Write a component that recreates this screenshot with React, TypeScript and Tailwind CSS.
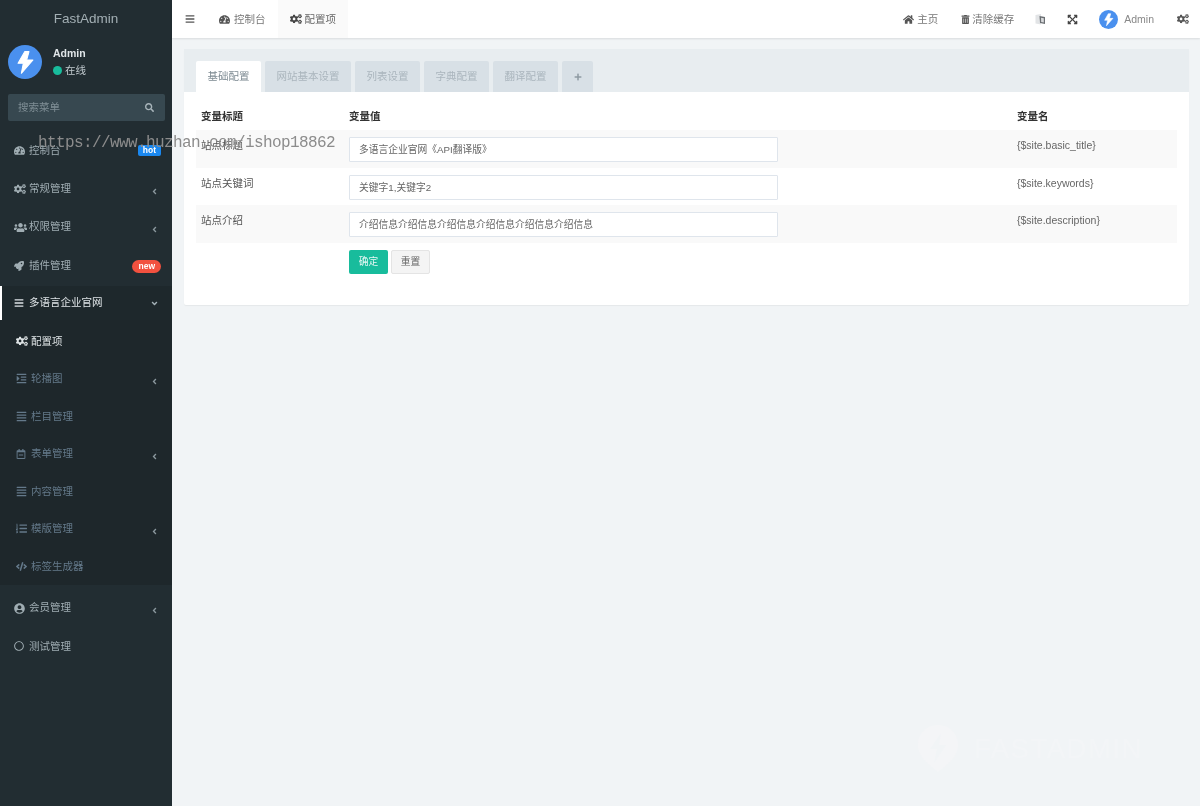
import React from "react";
import {
  FaBars, FaCogs, FaTachometerAlt, FaUsers, FaRocket, FaIndent, FaAlignJustify, FaRegCalendarMinus,
  FaListOl, FaCode, FaUserCircle, FaRegCircle, FaHome, FaTrashAlt, FaExpandArrowsAlt, FaSearch,
  FaAngleLeft, FaAngleDown, FaPlus,
} from "react-icons/fa";

const font = { fontFamily: '"Liberation Sans", "Noto Sans CJK SC", sans-serif' };

function Bolt({ size }: { size: number }) {
  return (
    <svg width={size} height={size} viewBox="0 0 40 40" className="shrink-0">
      <circle cx="20" cy="20" r="20" fill="#4a90ee" />
      <path d="M19.6 7.8 L24.7 7.8 L22 17.6 L29.4 17.6 L15.7 33.3 L18 21.6 L11.8 21.6 Z" fill="#fff" stroke="#fff" strokeWidth="1.2" strokeLinejoin="round" />
    </svg>
  );
}

function LangIcon() {
  return (
    <svg width="11" height="11" viewBox="0 0 11 11" className="ml-[21px]">
      <path d="M0.5 1 L6 0 L6 10.5 L0.5 9.5 Z" fill="#e2e4e6" />
      <path d="M4.5 2 L10 3 V10 L5 9 Z" fill="#6b6f73" />
      <path d="M6 3.8 L8.8 4.3 V8.4 L6.2 8 Z" fill="#d8dadc" />
    </svg>
  );
}

type Item = { label: string; icon: React.ReactNode; arrow?: boolean; badge?: "hot" | "new" };

const top: Item[] = [
  { label: "控制台", icon: <FaTachometerAlt size={11} />, badge: "hot" },
  { label: "常规管理", icon: <FaCogs size={12} />, arrow: true },
  { label: "权限管理", icon: <FaUsers size={13} />, arrow: true },
  { label: "插件管理", icon: <FaRocket size={10} />, badge: "new" },
];
const subs: Item[] = [
  { label: "轮播图", icon: <FaIndent size={11} />, arrow: true },
  { label: "栏目管理", icon: <FaAlignJustify size={11} /> },
  { label: "表单管理", icon: <FaRegCalendarMinus size={10} />, arrow: true },
  { label: "内容管理", icon: <FaAlignJustify size={11} /> },
  { label: "模版管理", icon: <FaListOl size={11} />, arrow: true },
  { label: "标签生成器", icon: <FaCode size={11} /> },
];
const bottom: Item[] = [
  { label: "会员管理", icon: <FaUserCircle size={11} />, arrow: true },
  { label: "测试管理", icon: <FaRegCircle size={10} /> },
];

function Arrow() {
  return <FaAngleLeft size={9} className="mt-[5px] mr-[2px] text-[#8a979d]" />;
}

function MainRow({ item }: { item: Item }) {
  return (
    <div className="flex h-[38.3px] items-center pl-[14px] pr-[11px] text-[#a0adb3]">
      <span className="flex w-[15px] shrink-0 items-center">{item.icon}</span>
      <span className="flex-1">{item.label}</span>
      {item.arrow && <Arrow />}
      {item.badge === "hot" && (
        <span className="rounded-[2px] bg-[#1a88f0] px-[5px] text-[8.5px] font-bold leading-[11px] text-[#fff]">hot</span>
      )}
      {item.badge === "new" && (
        <span className="mt-[1px] rounded-full bg-[#f2513f] px-[6px] text-[8.5px] font-bold leading-[13px] text-[#fff]">new</span>
      )}
    </div>
  );
}

function SubRow({ item }: { item: Item }) {
  return (
    <div className="flex h-[37.5px] items-center pl-[16px] pr-[11px] text-[#64798a]">
      <span className="flex w-[15px] shrink-0 items-center">{item.icon}</span>
      <span className="flex-1">{item.label}</span>
      {item.arrow && <Arrow />}
    </div>
  );
}

function Sidebar() {
  return (
    <aside className="flex w-[172px] shrink-0 flex-col bg-[#222d32] text-[10.5px]">
      <div className="flex h-[38px] items-center justify-center text-[13.5px] font-light text-[#a3afb4]">FastAdmin</div>
      <div className="flex h-[48px] items-center pl-[8px]">
        <Bolt size={34} />
        <div className="ml-[11px]">
          <div className="text-[10.5px] font-bold leading-[17px] text-[#e0e5e8]">Admin</div>
          <div className="flex items-center leading-[17px] text-[#c0c9ce]">
            <span className="mr-[3px] h-[9px] w-[9px] rounded-full bg-[#18bc9c]" />
            在线
          </div>
        </div>
      </div>
      <div className="ml-[8px] mr-[7px] mt-[8px] flex h-[27px] items-center justify-between rounded-[2px] bg-[#374850] pl-[10px] pr-[11px] text-[#7f8e95]">
        <span>搜索菜单</span>
        <FaSearch size={9} className="text-[#a8b4ba]" />
      </div>
      <div className="mt-[10.5px]">
        {top.map((i) => <MainRow key={i.label} item={i} />)}
      </div>
      <div className="mt-[1px] flex h-[34px] items-center border-l-2 border-[#fff] bg-[#1e282c] pl-[12px] pr-[11px] text-[#dfe4e7]">
        <span className="flex w-[15px] shrink-0 items-center"><FaBars size={10} /></span>
        <span className="flex-1">多语言企业官网</span>
        <FaAngleDown size={9} className="mt-[2px] mr-[2px] text-[#a5b2b8]" />
      </div>
      <div className="bg-[#1e272b] pt-[3px]">
        <div className="flex h-[37.5px] items-center pl-[16px] text-[#dfe4e6]">
          <span className="flex w-[15px] shrink-0 items-center"><FaCogs size={12} /></span>
          配置项
        </div>
        {subs.map((i) => <SubRow key={i.label} item={i} />)}
      </div>
      <div className="pt-[3.8px]">
        {bottom.map((i) => <MainRow key={i.label} item={i} />)}
      </div>
    </aside>
  );
}

function Header() {
  return (
    <header className="flex h-[38px] shrink-0 items-center bg-[#fff] text-[10.5px] text-[#777] shadow-[0_1px_2px_rgba(0,0,0,0.1)]">
      <FaBars size={10} className="ml-[13px] text-[#555]" />
      <div className="ml-[24px] flex items-center">
        <FaTachometerAlt size={11} className="text-[#555]" />
        <span className="ml-[4px] pt-[1px]">控制台</span>
      </div>
      <div className="ml-[12px] flex h-full w-[70px] items-center bg-[#fafafa] pl-[12px] text-[#666]">
        <FaCogs size={12} className="text-[#444]" />
        <span className="ml-[3px] pt-[1px]">配置项</span>
      </div>
      <div className="ml-auto flex items-center pr-[11px]">
        <FaHome size={11} className="text-[#555]" />
        <span className="ml-[3px] pt-[1px]">主页</span>
        <FaTrashAlt size={9} className="ml-[23px] text-[#555]" />
        <span className="ml-[2px] pt-[1px]">清除缓存</span>
        <LangIcon />
        <FaExpandArrowsAlt size={11} className="ml-[21px] text-[#444]" />
        <span className="ml-[21px]"><Bolt size={19} /></span>
        <span className="ml-[6px] pt-[1px] text-[#888]">Admin</span>
        <FaCogs size={12} className="ml-[23px] text-[#555]" />
      </div>
    </header>
  );
}

const tabs = ["网站基本设置", "列表设置", "字典配置", "翻译配置"];

const rows = [
  { label: "站点标题", value: "多语言企业官网《API翻译版》", name: "{$site.basic_title}", bg: "bg-[#f9f9f9]" },
  { label: "站点关键词", value: "关键字1,关键字2", name: "{$site.keywords}", bg: "bg-[#fff]" },
  { label: "站点介绍", value: "介绍信息介绍信息介绍信息介绍信息介绍信息介绍信息", name: "{$site.description}", bg: "bg-[#f9f9f9]" },
];

function Panel() {
  return (
    <section className="h-[256px] rounded-[2px] bg-[#fff] shadow-[0_1px_1px_rgba(0,0,0,0.05)]">
      <div className="flex h-[43px] items-end gap-[4px] bg-[#e8edf0] pl-[12px]">
        <div className="flex h-[31px] items-center rounded-t-[2px] bg-[#fff] px-[11.5px] text-[#7d8a92]">基础配置</div>
        {tabs.map((t) => (
          <div key={t} className="flex h-[31px] items-center rounded-t-[2px] bg-[#d8e0e6] px-[11.5px] text-[#aab5bd]">{t}</div>
        ))}
        <div className="flex h-[31px] w-[31px] items-center justify-center rounded-t-[2px] bg-[#d8e0e6] text-[#8e9aa3]">
          <FaPlus size={8} />
        </div>
      </div>
      <div className="px-[12px] pt-[8px]">
        <table className="w-full border-collapse">
          <thead>
            <tr className="h-[30px] text-left text-[#333]">
              <th className="w-[148px] pl-[5px] pt-[4px] align-middle font-bold">变量标题</th>
              <th className="w-[668px] pl-[5px] pt-[4px] align-middle font-bold">变量值</th>
              <th className="pl-[5px] pt-[4px] align-middle font-bold">变量名</th>
            </tr>
          </thead>
          <tbody>
            {rows.map((r) => (
              <tr key={r.label} className={`${r.bg} h-[37.6px] align-top`}>
                <td className="pl-[5px] pt-[8px] text-[#555]">{r.label}</td>
                <td className="pl-[5px] pt-[7px]">
                  <div className="flex h-[25px] w-[429px] items-center rounded-[1px] border border-[#dfe5ec] bg-[#fff] pl-[9px] pt-[2px] text-[9.75px] text-[#666]">{r.value}</div>
                </td>
                <td className="pl-[5px] pt-[8px] text-[#666]">{r.name}</td>
              </tr>
            ))}
          </tbody>
        </table>
        <div className="ml-[153px] mt-[7px] flex gap-[3px]">
          <div className="flex h-[24px] w-[39px] items-center justify-center rounded-[2px] bg-[#18bc9c] pt-[1px] text-[9.75px] text-[#e8f8f5]">确定</div>
          <div className="flex h-[24px] w-[39px] items-center justify-center rounded-[2px] border border-[#e4e4e4] bg-[#f4f4f4] pt-[1px] text-[9.75px] text-[#666]">重置</div>
        </div>
      </div>
    </section>
  );
}

export default function App() {
  return (
    <div className="relative flex h-[806px] w-[1200px] overflow-hidden bg-[#f1f4f6] text-[10.5px] blur-[0.35px]" style={font}>
      <Sidebar />
      <main className="flex min-w-0 flex-1 flex-col">
        <Header />
        <div className="pl-[12px] pr-[11px] pt-[11px]">
          <Panel />
        </div>
      </main>
      <div
        className="pointer-events-none absolute left-[38px] top-[134px] whitespace-nowrap text-[16px] leading-[18px] tracking-[-0.6px] text-[#8c8c8c]"
        style={{ fontFamily: '"Liberation Mono", monospace' }}
      >
        https://www.huzhan.com/ishop18862
      </div>
      <div className="pointer-events-none absolute left-[917px] top-[725px] flex items-center text-[#f3f5f7]">
        <svg width="42" height="48" viewBox="0 0 42 48">
          <path d="M21 0 C33 0 41 9 41 20 C41 32 30 40 21 47 C12 40 1 32 1 20 C1 9 9 0 21 0 Z" fill="#f4f5f7" />
          <path d="M24 8 L13 24 L20 24 L17 38 L29 20 L22 20 Z" fill="#f1f4f6" />
        </svg>
        <span className="ml-[15px] text-[27.5px] font-light leading-none tracking-[1.5px]">FASTADMIN</span>
      </div>
    </div>
  );
}
